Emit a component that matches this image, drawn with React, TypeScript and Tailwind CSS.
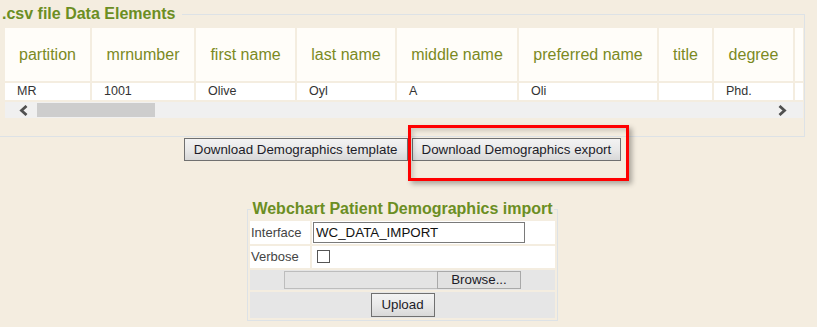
import React from 'react';

const columns = [
  { label: 'partition', value: 'MR', cls: 'w-[85px]' },
  { label: 'mrnumber', value: '1001', cls: 'w-[102px]' },
  { label: 'first name', value: 'Olive', cls: 'w-[99px]' },
  { label: 'last name', value: 'Oyl', cls: 'w-[98px]' },
  { label: 'middle name', value: 'A', cls: 'w-[120px]' },
  { label: 'preferred name', value: 'Oli', cls: 'w-[138px]' },
  { label: 'title', value: '', cls: 'w-[53px]' },
  { label: 'degree', value: 'Phd.', cls: 'w-[79px]' },
  { label: '', value: '', cls: 'w-[80px]' },
];

function Chevron({ dir }: { dir: 'left' | 'right' }) {
  return (
    <svg width="9" height="11" viewBox="0 0 9 11" className="shrink-0">
      <path
        d={dir === 'left' ? 'M7.5 1 L2.5 5.5 L7.5 10' : 'M1.5 1 L6.5 5.5 L1.5 10'}
        fill="none"
        stroke="#505050"
        strokeWidth="2.8"
      />
    </svg>
  );
}

const winButton =
  'border border-[#707070] bg-linear-to-b from-[#f3f3f3] via-[#e9e9e9] to-[#d8d8d8] text-[13.333px] leading-[15px] text-[#1c1c28]';

export default function App() {
  return (
    <div className="relative w-[817px] h-[327px] overflow-hidden bg-[#f4ede0] font-['Liberation_Sans',Arial,sans-serif]">
      <div className="w-[805px]">
        {/* csv preview */}
        <fieldset className="mt-[5px] border border-l-0 border-[#dde2e6] p-0 pb-[18px]">
          <legend className="pl-[2px] pr-[7px] text-[16px] leading-[18px] font-bold text-[#6b8e23]">
            .csv file Data Elements
          </legend>
          <div className="mt-[3px] ml-[3px] w-[800px] overflow-hidden">
            <table className="table-fixed w-[874px] border-separate border-spacing-[2px]">
              <thead>
                <tr>
                  {columns.map((c, i) => (
                    <th
                      key={i}
                      className={`${c.cls} h-[53px] p-0 bg-[#fffdf9] text-center text-[16px] font-normal text-[#7b8a1f] whitespace-nowrap`}
                    >
                      {c.label}
                    </th>
                  ))}
                </tr>
              </thead>
              <tbody>
                <tr>
                  {columns.map((c, i) => (
                    <td
                      key={i}
                      className="h-[17px] p-0 pl-3 bg-white text-left text-[12.5px] leading-[17px] text-[#333] whitespace-nowrap"
                    >
                      {c.value}
                    </td>
                  ))}
                </tr>
              </tbody>
            </table>
            <div className="ml-[2px] w-[798px] h-[16px] bg-[#f0f0f0] flex items-center">
              <div className="pl-[14px]">
                <Chevron dir="left" />
              </div>
              <div className="ml-[9px] w-[118px] h-[14px] bg-[#cdcdcd]" />
              <div className="ml-auto mr-[16px]">
                <Chevron dir="right" />
              </div>
            </div>
          </div>
        </fieldset>

        <div className="mt-px flex justify-center gap-1">
          <button className={`${winButton} px-[9px] py-[3px]`}>Download Demographics template</button>
          <button className={`${winButton} px-[9px] py-[3px]`}>Download Demographics export</button>
        </div>

        {/* import form */}
        <fieldset className="mx-auto mt-[39px] w-[311px] border border-[#dde2e6] p-0">
          <legend className="mx-auto px-[1px] text-[16px] leading-[18px] font-bold text-[#6b8e23]">
            Webchart Patient Demographics import
          </legend>
          <table className="mt-px w-full border-separate border-spacing-[2px] text-[13px] text-[#444]">
            <tbody>
              <tr>
                <td className="w-[60px] p-px bg-white">Interface</td>
                <td className="p-px bg-white">
                  <input
                    readOnly
                    value="WC_DATA_IMPORT"
                    className="block w-[212px] h-[21px] border border-[#7a7a7a] bg-white px-[2px] text-[13.333px] text-[#111]"
                  />
                </td>
              </tr>
              <tr>
                <td className="p-px bg-white">Verbose</td>
                <td className="p-px bg-white">
                  <input
                    type="checkbox"
                    className="block appearance-none ml-[4px] my-[3px] w-[13px] h-[13px] border border-[#555] bg-white"
                  />
                </td>
              </tr>
              <tr>
                <td colSpan={2} className="p-px bg-[#e6e6e6]">
                  <div className="flex justify-center">
                    <div className="w-[153px] h-[18px] border border-r-0 border-[#bdbdbd] bg-[#e4e4e4]" />
                    <button className="w-[84px] h-[18px] border border-[#a9a9a9] bg-[#e1e1e1] text-[13.333px] leading-[15px] text-[#1c1c28]">
                      Browse...
                    </button>
                  </div>
                </td>
              </tr>
              <tr>
                <td colSpan={2} className="p-px bg-[#e6e6e6] text-center">
                  <button className={`${winButton} w-[64px] h-[24px]`}>Upload</button>
                </td>
              </tr>
            </tbody>
          </table>
        </fieldset>
      </div>

      {/* highlight annotation */}
      <div className="absolute left-[408px] top-[125px] w-[221px] h-[56px] border-[3px] border-[#ff0000] shadow-[3px_3px_5px_rgba(0,0,0,0.3),inset_3px_3px_4px_rgba(0,0,0,0.15)]" />
    </div>
  );
}
